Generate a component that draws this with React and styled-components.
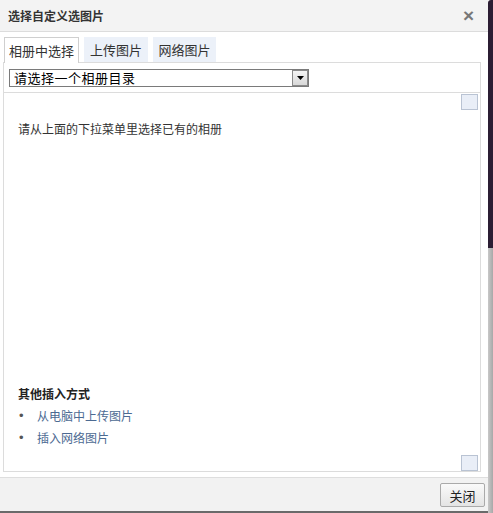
import React from 'react'
import styled, { createGlobalStyle } from 'styled-components'

const GlobalStyle = createGlobalStyle`
  html, body {
    margin: 0;
    padding: 0;
    background: #fff;
  }
  body {
    font-family: "Noto Sans CJK SC", "Liberation Sans", sans-serif;
    color: #333;
  }
`

const tabs = [
  { label: '相册中选择', width: 75, active: true },
  { label: '上传图片', width: 64 },
  { label: '网络图片', width: 63 },
]

const links = ['从电脑中上传图片', '插入网络图片']

const App = () => {
  return (
    <Page>
      <GlobalStyle />
      <Dialog>
        <TitleBar>
          <Title>选择自定义选图片</Title>
          <Close>×</Close>
        </TitleBar>
        <Body>
          <Tabs>
            {tabs.map((t) => (
              <Tab key={t.label} $active={t.active} $w={t.width}>
                {t.label}
              </Tab>
            ))}
            <TabFill />
          </Tabs>
          <Panel>
            <SelectRow>
              <Select>
                <SelectText>请选择一个相册目录</SelectText>
                <SelectArrow>
                  <svg width="7" height="4" viewBox="0 0 7 4">
                    <path d="M0 0 H7 L3.5 4 Z" fill="#000" />
                  </svg>
                </SelectArrow>
              </Select>
            </SelectRow>
            <Content>
              <Main>
                <Hint>请从上面的下拉菜单里选择已有的相册</Hint>
                <Other>
                  <OtherTitle>其他插入方式</OtherTitle>
                  {links.map((l) => (
                    <LinkRow key={l}>
                      <Bullet>•</Bullet>
                      <LinkText>{l}</LinkText>
                    </LinkRow>
                  ))}
                </Other>
              </Main>
              <Scroll>
                <ScrollBtn />
                <ScrollBtn />
              </Scroll>
            </Content>
          </Panel>
        </Body>
        <Footer>
          <Button>关闭</Button>
        </Footer>
      </Dialog>
      <Edge>
        <EdgeDark />
        <EdgeGrey />
      </Edge>
    </Page>
  )
}

export default App

const Page = styled.div`
  width: 493px;
  height: 513px;
  display: flex;
  overflow: hidden;
`

const Dialog = styled.div`
  width: 488px;
  height: 511px;
  display: flex;
  flex-direction: column;
  background: #fff;
  border-bottom: 2px solid #6a6a6a;
`

const TitleBar = styled.div`
  height: 31px;
  flex-shrink: 0;
  display: flex;
  align-items: center;
  justify-content: space-between;
  padding: 0 14px 0 8px;
  background: #f3f3f3;
  border-bottom: 1px solid #dcdcdc;
`

const Title = styled.span`
  font-size: 12px;
  font-weight: bold;
  color: #333;
`

const Close = styled.span`
  font-family: "Liberation Sans", sans-serif;
  font-size: 19px;
  font-weight: bold;
  color: #777;
  line-height: 1;
`

const Body = styled.div`
  padding: 5px 7px 0 3px;
  display: flex;
  flex-direction: column;
`

const Tabs = styled.div`
  display: flex;
  align-items: flex-start;
  height: 25px;
  gap: 5px;
`

const Tab = styled.div`
  width: ${(p) => p.$w}px;
  height: ${(p) => (p.$active ? 26 : 25)}px;
  box-sizing: border-box;
  display: flex;
  align-items: center;
  justify-content: center;
  font-size: 13px;
  color: #333;
  margin-left: ${(p) => (p.$active ? '1px' : '0')};
  background: ${(p) => (p.$active ? '#fff' : '#ecf1f9')};
  border: ${(p) => (p.$active ? '1px solid #cfcfcf' : 'none')};
  border-bottom: none;
  position: relative;
  z-index: 1;
`

const TabFill = styled.div`
  flex: 1;
`

const Panel = styled.div`
  height: 408px;
  border: 1px solid #dcdcdc;
  display: flex;
  flex-direction: column;
`

const SelectRow = styled.div`
  height: 30px;
  flex-shrink: 0;
  border-bottom: 1px solid #dcdcdc;
  padding: 6px 0 0 5px;
  box-sizing: border-box;
`

const Select = styled.div`
  width: 300px;
  height: 18px;
  box-sizing: border-box;
  border: 1px solid #7a7a7a;
  display: flex;
  align-items: center;
  justify-content: space-between;
  background: #fff;
`

const SelectText = styled.span`
  font-size: 13px;
  letter-spacing: 0.5px;
  color: #000;
  padding-left: 4px;
  line-height: 16px;
`

const SelectArrow = styled.span`
  width: 16px;
  height: 16px;
  box-sizing: border-box;
  border: 1px solid #8a8a8a;
  background: linear-gradient(#f4f4f4, #d8d8d8);
  display: flex;
  align-items: center;
  justify-content: center;
`

const Content = styled.div`
  flex: 1;
  display: flex;
`

const Main = styled.div`
  flex: 1;
  display: flex;
  flex-direction: column;
  justify-content: space-between;
  padding: 27px 0 25px 14px;
`

const Hint = styled.div`
  font-size: 12px;
  color: #333;
`

const Other = styled.div`
  display: flex;
  flex-direction: column;
  gap: 5px;
`

const OtherTitle = styled.div`
  font-size: 12px;
  font-weight: bold;
  color: #222;
`

const LinkRow = styled.div`
  display: flex;
  align-items: center;
  font-size: 12px;
  height: 17px;
`

const Bullet = styled.span`
  width: 18px;
  font-family: "Liberation Sans", sans-serif;
  font-size: 13px;
  color: #555;
  padding-left: 1px;
`

const LinkText = styled.span`
  color: #4c6a92;
`

const Scroll = styled.div`
  width: 19px;
  display: flex;
  flex-direction: column;
  justify-content: space-between;
  padding: 1px 0 0 0;
`

const ScrollBtn = styled.div`
  width: 17px;
  height: 16px;
  box-sizing: border-box;
  border: 1px solid #b9c3d3;
  background: #e9eef7;
`

const Footer = styled.div`
  margin-top: 5px;
  flex: 1;
  background: #f2f2f2;
  border-top: 1px solid #dedede;
  display: flex;
  justify-content: flex-end;
  align-items: flex-start;
  padding: 5px 3px 0 0;
`

const Button = styled.button`
  width: 45px;
  height: 24px;
  box-sizing: border-box;
  border: 1px solid #aaa;
  border-radius: 2px;
  background: linear-gradient(#fafafa, #e4e4e4);
  font-family: "Noto Sans CJK SC", sans-serif;
  font-size: 13px;
  color: #222;
  padding: 0;
`

const Edge = styled.div`
  width: 5px;
  display: flex;
  flex-direction: column;
`

const EdgeDark = styled.div`
  height: 248px;
  background: #2b1d33;
  border-top-left-radius: 3px;
`

const EdgeGrey = styled.div`
  flex: 1;
  background: linear-gradient(90deg, #c8c8c8, #a8a8a8);
`
